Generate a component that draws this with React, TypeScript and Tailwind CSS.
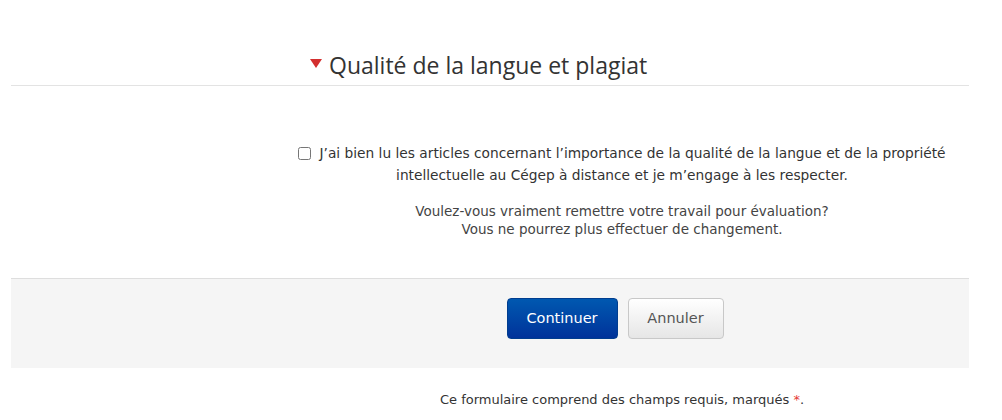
export default function App() {
  return (
    <div className="min-h-[420px] bg-white">
      <div className="ml-[11px] w-[958px]">
        <fieldset>
          <div className="h-[86px] border-b border-[#e3e3e3] flex items-end">
            <div className="ml-[299px] mb-[5px] flex items-center gap-[7px] text-[23px] leading-[30px] text-[#333] font-['Open_Sans',sans-serif]">
              <svg width="12" height="9" viewBox="0 0 12 9" className="mt-[-4px]">
                <path d="M0 0 L12 0 L6 9 Z" fill="#d32f2f" />
              </svg>
              <span>Qualité de la langue et plagiat</span>
            </div>
          </div>

          <div className="flex pt-[56px]">
            <div className="w-[274px] shrink-0" />
            <div className="flex-1 pr-[10px] font-['DejaVu_Sans',Verdana,sans-serif] text-center">
              <label className="block text-[13.75px] leading-[22px] text-[#333]">
                <input
                  type="checkbox"
                  className="w-[13px] h-[13px] align-[-2px] mr-[8px] accent-[#888]"
                />
                J’ai bien lu les articles concernant l’importance de la qualité de la langue et de la propriété intellectuelle au Cégep à distance et je m’engage à les respecter.
              </label>
              <p className="mt-[16px] text-[13.5px] leading-[18px] text-[#444]">
                Voulez-vous vraiment remettre votre travail pour évaluation?
                <br />
                Vous ne pourrez plus effectuer de changement.
              </p>
            </div>
          </div>
        </fieldset>

        <div className="mt-[40px] h-[90px] bg-[#f5f5f5] border-t border-[#dedede] flex">
          <div className="w-[274px] shrink-0" />
          <div className="flex-1 flex justify-center items-start pt-[19px] gap-[10px] pr-[24px] font-['DejaVu_Sans',Verdana,sans-serif]">
            <button className="w-[111px] h-[41px] rounded-[4px] border border-[#003d8f] bg-gradient-to-b from-[#0058b0] to-[#00329a] text-white text-[14.5px]">
              Continuer
            </button>
            <button className="w-[96px] h-[41px] rounded-[4px] border border-[#c8c8c8] bg-gradient-to-b from-white to-[#e6e6e6] text-[#555] text-[14.5px]">
              Annuler
            </button>
          </div>
        </div>

        <div className="flex pt-[23px]">
          <div className="w-[274px] shrink-0" />
          <p className="flex-1 pr-[10px] text-center text-[13px] leading-[18px] text-[#333] font-['DejaVu_Sans',Verdana,sans-serif]">
            Ce formulaire comprend des champs requis, marqués{" "}
            <span className="text-[#e53935]">*</span>.
          </p>
        </div>
      </div>
    </div>
  );
}
